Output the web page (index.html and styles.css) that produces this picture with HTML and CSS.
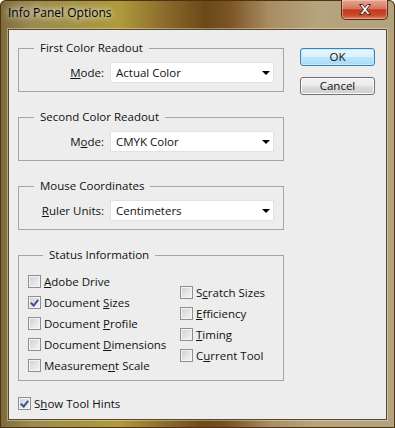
FILE: index.html
```html
<!DOCTYPE html>
<html lang="en">
    <head>
        <meta charset="UTF-8">
        <meta name="viewport" content="width=device-width, initial-scale=1.0">
        <title>Info Panel Options</title>
        <link rel="stylesheet" href="styles.css">
    </head>

    <body>
        <div class="window">
            <div class="titlebar">
                <span class="title">Info Panel Options</span>
                <button class="close-btn" aria-label="Close">
                    <svg width="14" height="11" viewBox="0 0 14 11">
                        <path d="M1.5 0.5h3l2.5 3 2.5-3h3l-4 5 4 5h-3l-2.5-3-2.5 3h-3l4-5z" fill="#ffffff" stroke="#3a2a2a" stroke-width="1" stroke-linejoin="round"/>
                    </svg>
                </button>
            </div>

            <div class="client">
                <div class="main">
                    <div class="groups">
                        <fieldset class="group">
                            <legend>First Color Readout</legend>
                            <div class="field">
                                <label class="field-label"><u>M</u>ode:</label>
                                <div class="select"><span>Actual Color</span><span class="arrow"></span></div>
                            </div>
                        </fieldset>

                        <fieldset class="group">
                            <legend>Second Color Readout</legend>
                            <div class="field">
                                <label class="field-label">M<u>o</u>de:</label>
                                <div class="select"><span>CMYK Color</span><span class="arrow"></span></div>
                            </div>
                        </fieldset>

                        <fieldset class="group">
                            <legend>Mouse Coordinates</legend>
                            <div class="field">
                                <label class="field-label"><u>R</u>uler Units:</label>
                                <div class="select"><span>Centimeters</span><span class="arrow"></span></div>
                            </div>
                        </fieldset>

                        <fieldset class="group status">
                            <legend>Status Information</legend>
                            <div class="status-cols">
                                <div class="col col-left">
                                    <label class="check"><span class="box"></span><span><u>A</u>dobe Drive</span></label>
                                    <label class="check"><span class="box checked"></span><span>Document <u>S</u>izes</span></label>
                                    <label class="check"><span class="box"></span><span>Document <u>P</u>rofile</span></label>
                                    <label class="check"><span class="box"></span><span>Document <u>D</u>imensions</span></label>
                                    <label class="check"><span class="box"></span><span>Measureme<u>n</u>t Scale</span></label>
                                </div>
                                <div class="col">
                                    <label class="check"><span class="box"></span><span>S<u>c</u>ratch Sizes</span></label>
                                    <label class="check"><span class="box"></span><span><u>E</u>fficiency</span></label>
                                    <label class="check"><span class="box"></span><span><u>T</u>iming</span></label>
                                    <label class="check"><span class="box"></span><span>C<u>u</u>rrent Tool</span></label>
                                </div>
                            </div>
                        </fieldset>
                    </div>

                    <div class="buttons">
                        <button class="btn btn-default">OK</button>
                        <button class="btn">Cancel</button>
                    </div>
                </div>

                <label class="check hints"><span class="box checked"></span><span>S<u>h</u>ow Tool Hints</span></label>
            </div>
        </div>
    </body>
</html>
```

FILE: styles.css
```css
body {
    margin: 0;
    font-family: "Open Sans", "Liberation Sans", sans-serif;
    font-size: 11.5px;
    color: #111;
}

.window {
    width: 395px;
    height: 428px;
    box-sizing: border-box;
    padding: 0 8px 8px 8px;
    border-radius: 6px 6px 0 0;
    background: linear-gradient(90deg, #7d6a3a 0%, #9c8a50 8%, #a59442 22%, #b09a3c 30%, #8a6a2c 42%, #6c4818 52%, #7a5424 58%, #a88c62 68%, #b5a47e 80%, #b2a27e 100%);
    display: flex;
    flex-direction: column;
    box-shadow: inset 0 0 0 1px #4a3412;
}

.titlebar {
    height: 29px;
    display: flex;
    justify-content: space-between;
    align-items: flex-start;
    margin-right: -1px;
}

.title {
    padding-top: 5px;
    line-height: 16px;
    font-size: 12px;
    color: #000;
    text-shadow: 0 0 6px #fff, 0 0 10px rgba(255,255,255,0.8);
}

.close-btn {
    width: 47px;
    height: 20px;
    padding: 0;
    border: 1px solid #5a2418;
    border-top: none;
    border-radius: 0 0 5px 5px;
    background: linear-gradient(180deg, #e6a896 0%, #d5755e 45%, #c2391c 52%, #c94a2a 80%, #e08060 100%);
    box-shadow: inset 0 0 0 1px rgba(255,220,200,0.45);
    display: flex;
    align-items: center;
    justify-content: center;
}

.client {
    flex: 1;
    background: #ededed;
    border: 1px solid #5a4828;
    box-shadow: 0 0 0 1px rgba(255,255,255,0.35);
    box-sizing: border-box;
    padding: 11px 0 0 9px;
}

.main {
    display: flex;
    gap: 16px;
}

.groups {
    width: 266px;
}

.group {
    margin: 18px 0 0 0;
    padding: 7px 9px 8px 0;
    border: 1px solid #a5a5a5;
    min-width: 0;
}

.group:first-child {
    margin-top: 0;
}

.group legend {
    margin-left: 15px;
    padding: 0 6px;
    line-height: 14px;
}

.field {
    display: flex;
    align-items: center;
    gap: 6px;
}

.field-label {
    width: 85px;
    text-align: right;
}

.select {
    flex: 1;
    height: 21px;
    box-sizing: border-box;
    background: #fff;
    border: 1px solid #e2e2e2;
    padding-left: 5px;
    display: flex;
    align-items: center;
    justify-content: space-between;
}

.arrow {
    width: 0;
    height: 0;
    margin-right: 3px;
    border-left: 4px solid transparent;
    border-right: 4px solid transparent;
    border-top: 4px solid #000;
}

.status {
    padding: 9px 0 4px 9px;
}

.status-cols {
    display: flex;
    align-items: center;
}

.col {
    display: flex;
    flex-direction: column;
}

.col-left {
    width: 152px;
}

.check {
    height: 21px;
    display: flex;
    align-items: center;
    gap: 3px;
    white-space: nowrap;
}

.box {
    width: 13px;
    height: 13px;
    box-sizing: border-box;
    border: 1px solid #8e8f8f;
    background: linear-gradient(135deg, #cdd0d4 0%, #e2e3e5 50%, #f6f6f6 100%);
    box-shadow: inset 0 0 0 1px #f4f4f4;
    position: relative;
}

.box.checked::after {
    content: "";
    position: absolute;
    left: 3px;
    top: 1px;
    width: 3px;
    height: 6px;
    border-right: 2px solid #3d5190;
    border-bottom: 2px solid #3d5190;
    transform: rotate(40deg);
}

.buttons {
    display: flex;
    flex-direction: column;
    gap: 11px;
    padding-top: 7px;
}

.btn {
    width: 75px;
    height: 18px;
    padding: 0;
    font-family: inherit;
    font-size: 11.5px;
    line-height: 14px;
    color: #111;
    border: 1px solid #707070;
    border-radius: 3px;
    background: linear-gradient(180deg, #f2f2f2 0%, #ebebeb 50%, #dddddd 51%, #cfcfcf 100%);
    box-shadow: inset 0 0 0 1px #fcfcfc;
}

.btn-default {
    border-color: #3c7fb1;
    background: linear-gradient(180deg, #eaf6fd 0%, #d9f0fc 50%, #bee6fd 51%, #a7d9f5 100%);
    box-shadow: inset 0 0 0 1px #c2ecfc;
}

.hints {
    margin-top: 12px;
}
```
